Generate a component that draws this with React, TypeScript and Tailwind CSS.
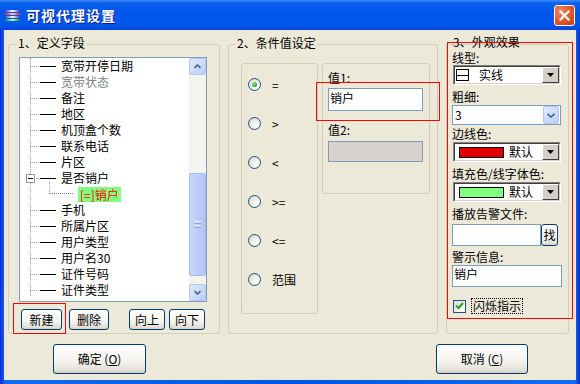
import React from "react";

const treeItems: { label: string; gray?: boolean; expand?: boolean; child?: boolean }[] = [
  { label: "宽带开停日期" },
  { label: "宽带状态", gray: true },
  { label: "备注" },
  { label: "地区" },
  { label: "机顶盒个数" },
  { label: "联系电话" },
  { label: "片区" },
  { label: "是否销户", expand: true },
  { label: "[=]销户", child: true },
  { label: "手机" },
  { label: "所属片区" },
  { label: "用户类型" },
  { label: "用户名30" },
  { label: "证件号码" },
  { label: "证件类型" },
];

function XPButton({ label, className }: { label: React.ReactNode; className: string }) {
  return (
    <div
      className={
        "flex items-center justify-center rounded-[3px] border border-[#003C74] bg-[linear-gradient(to_bottom,#FFFFFF_0%,#F4F3EE_60%,#E3E0D5_90%,#D6D0C5_100%)] text-black " +
        className
      }
    >
      {label}
    </div>
  );
}

function Radio({ checked }: { checked?: boolean }) {
  return (
    <div className="w-[13px] h-[13px] rounded-full border border-[#1C5180] bg-[radial-gradient(circle_at_70%_70%,#FFFFFF_0%,#F0EFEA_40%,#D4D0C5_100%)] flex items-center justify-center">
      {checked && <div className="w-[5px] h-[5px] rounded-full bg-[radial-gradient(circle_at_35%_35%,#8CF38C_0%,#21A121_70%,#1A7A1A_100%)]" />}
    </div>
  );
}

function ClassicArrow() {
  return (
    <div className="w-[17px] h-full bg-[#D4D0C8] border-t border-l border-t-[#FFFFFF] border-l-[#FFFFFF] border-r border-b border-r-[#404040] border-b-[#404040] flex items-center justify-center">
      <svg width="7" height="4" viewBox="0 0 7 4">
        <path d="M0 0h7L3.5 4z" fill="#000" />
      </svg>
    </div>
  );
}

function ClassicCombo({ children }: { children: React.ReactNode }) {
  return (
    <div className="w-[108px] h-[20px] border-t border-l border-t-[#808080] border-l-[#808080] border-r border-b border-r-[#FFFFFF] border-b-[#FFFFFF]">
      <div className="w-full h-full border-t border-l border-t-[#404040] border-l-[#404040] border-r border-b border-r-[#D4D0C8] border-b-[#D4D0C8] bg-white flex items-center">
        <div className="flex-1 flex items-center h-full">{children}</div>
        <ClassicArrow />
      </div>
    </div>
  );
}

export default function App() {
  return (
    <div className="w-[580px] h-[384px] flex flex-col overflow-hidden bg-[linear-gradient(to_right,#0831D9_0%,#166AEE_1%,#0055E5_50%,#166AEE_99%,#0831D9_100%)] text-[12px] leading-[16px] text-black font-['SimSun','Noto_Sans_CJK_SC','Liberation_Sans',sans-serif]">
      {/* Title bar */}
      <div className="h-[30px] flex items-center pl-[5px] pr-[5px] bg-[linear-gradient(to_bottom,#3D8BF7_0%,#0A61EE_10%,#0055EA_45%,#0058EE_80%,#0046D2_100%)]">
        <svg width="15" height="12" viewBox="0 0 15 12" className="mt-[1px]">
          <defs>
            <linearGradient id="gb" x1="0" x2="1">
              <stop offset="0" stopColor="#2040E0" />
              <stop offset="0.5" stopColor="#FFFFFF" />
              <stop offset="1" stopColor="#2040E0" />
            </linearGradient>
            <linearGradient id="gr" x1="0" x2="1">
              <stop offset="0" stopColor="#E02020" />
              <stop offset="0.5" stopColor="#FFC0C0" />
              <stop offset="1" stopColor="#E02020" />
            </linearGradient>
            <linearGradient id="gg" x1="0" x2="1">
              <stop offset="0" stopColor="#109010" />
              <stop offset="0.5" stopColor="#C0FFC0" />
              <stop offset="1" stopColor="#109010" />
            </linearGradient>
          </defs>
          <rect x="0" y="0" width="15" height="2" fill="url(#gb)" />
          <rect x="0" y="3" width="15" height="2" fill="url(#gr)" />
          <rect x="0" y="6" width="15" height="2" fill="url(#gb)" />
          <rect x="0" y="9" width="15" height="2" fill="url(#gg)" />
        </svg>
        <div className="ml-[6px] text-white font-bold text-[14px] leading-[18px] [text-shadow:1px_1px_0_#0A1E8A] tracking-[1px]">
          可视代理设置
        </div>
        <div className="ml-auto mr-[0px] w-[21px] h-[21px] rounded-[3px] border border-white bg-[radial-gradient(circle_at_30%_30%,#F08A66_0%,#E35A2B_50%,#C23A10_100%)] flex items-center justify-center">
          <svg width="11" height="11" viewBox="0 0 11 11">
            <path d="M1.5 1.5L9.5 9.5M9.5 1.5L1.5 9.5" stroke="#FFFFFF" strokeWidth="2.2" strokeLinecap="square" />
          </svg>
        </div>
      </div>

      {/* Client area */}
      <div className="flex-1 mx-[4px] mb-[4px] bg-[#ECE9D8] flex flex-col">
        <div className="flex pt-[14px] pl-[4px]">
          {/* Group 1 */}
          <div className="relative w-[212px] h-[290px] border border-[#D0D0BF] rounded-[3px] pt-[12px] pl-[10px]">
            <div className="absolute -top-[9px] left-[8px] px-[1px] bg-[#ECE9D8] leading-[14px]">1、定义字段</div>
            {/* Tree box */}
            <div className="w-[188px] h-[245px] border border-[#7F9DB9] bg-white flex">
              <div className="relative flex-1 overflow-hidden">
                <div className="absolute left-[10px] top-0 h-[238px] border-l border-dotted border-[#A0A0A0]" />
                <div className="flex flex-col">
                  {treeItems.map((it, i) =>
                    it.child ? (
                      <div key={i} className="relative h-[16px] flex items-center">
                        <div className="absolute left-[29px] -top-[4px] h-[12px] border-l border-dotted border-[#A0A0A0]" />
                        <div className="absolute left-[29px] top-[7px] w-[24px] border-t border-dotted border-[#808080]" />
                        <div className="ml-[58px] px-[2px] bg-[#80FF80] text-[#FF0000] leading-[15px]">{it.label}</div>
                      </div>
                    ) : (
                      <div key={i} className="relative h-[16px] flex items-center">
                        <div className="absolute left-[10px] top-[8px] w-[9px] border-t border-dotted border-[#A0A0A0]" />
                        {it.expand && (
                          <div className="absolute left-[6px] top-[4px] w-[9px] h-[9px] border border-[#919B9C] bg-white flex items-center justify-center">
                            <div className="w-[5px] h-[1px] bg-black" />
                          </div>
                        )}
                        <div className="absolute left-[20px] top-[8px] w-[16px] h-[1px] bg-black" />
                        <div className={"ml-[41px] " + (it.gray ? "text-[#808080]" : "text-black")}>{it.label}</div>
                      </div>
                    )
                  )}
                </div>
              </div>
              {/* Scrollbar */}
              <div className="w-[17px] h-full bg-[#F4F3EE] flex flex-col">
                <div className="h-[17px] w-[17px] rounded-[2px] border border-[#B5C8F3] bg-[linear-gradient(to_bottom_right,#E1EAFE,#B9CEF9)] flex items-center justify-center">
                  <svg width="7" height="5" viewBox="0 0 7 5">
                    <path d="M0.5 4L3.5 1L6.5 4" stroke="#4D6185" strokeWidth="1.6" fill="none" />
                  </svg>
                </div>
                <div className="mt-[98px] h-[103px] w-[17px] rounded-[2px] border border-[#A4B9EC] bg-[linear-gradient(to_right,#C8D6FB,#BCCDF8_50%,#B1C4F5)] flex flex-col items-center justify-center gap-[1px]">
                  <div className="w-[7px] h-[1px] bg-[#EEF4FE]" />
                  <div className="w-[7px] h-[1px] bg-[#8CA7E6]" />
                  <div className="w-[7px] h-[1px] bg-[#EEF4FE]" />
                  <div className="w-[7px] h-[1px] bg-[#8CA7E6]" />
                </div>
                <div className="mt-auto h-[17px] w-[17px] rounded-[2px] border border-[#B5C8F3] bg-[linear-gradient(to_bottom_right,#E1EAFE,#B9CEF9)] flex items-center justify-center">
                  <svg width="7" height="5" viewBox="0 0 7 5">
                    <path d="M0.5 1L3.5 4L6.5 1" stroke="#4D6185" strokeWidth="1.6" fill="none" />
                  </svg>
                </div>
              </div>
            </div>
            {/* Buttons */}
            <div className="flex mt-[7px] pl-[2px]">
              <XPButton label="新建" className="w-[41px] h-[21px]" />
              <XPButton label="删除" className="ml-[7px] w-[40px] h-[21px]" />
              <XPButton label="向上" className="ml-[20px] w-[36px] h-[21px]" />
              <XPButton label="向下" className="ml-[4px] w-[36px] h-[21px]" />
            </div>
            <div className="absolute left-[4px] top-[258px] w-[53px] h-[31px] border border-[#FF0000]" />
          </div>

          {/* Group 2 */}
          <div className="relative ml-[8px] w-[210px] h-[290px] border border-[#D0D0BF] rounded-[3px] pt-[18px] pl-[12px] flex items-start">
            <div className="absolute -top-[9px] left-[7px] px-[1px] bg-[#ECE9D8] leading-[14px]">2、条件值设定</div>
            <div className="w-[77px] h-[251px] border border-[#D0D0BF] rounded-[3px] pt-[1px] pl-[6px] flex flex-col">
              {["=", ">", "<", ">=", "<=", "范围"].map((s, i) => (
                <div key={i} className="h-[39px] flex items-center">
                  <Radio checked={i === 0} />
                  <div className="ml-[11px]">{s}</div>
                </div>
              ))}
            </div>
            <div className="ml-[4px] w-[108px] h-[131px] border border-[#D0D0BF] rounded-[3px] pt-[6px] pl-[5px] flex flex-col">
              <div>值1:</div>
              <div className="mt-[2px] w-[95px] h-[23px] border border-[#7F9DB9] bg-white pl-[1px] pt-[1px]">销户</div>
              <div className="mt-[11px]">值2:</div>
              <div className="mt-[3px] w-[95px] h-[21px] border border-[#7F9DB9] bg-[#D6D3CE]" />
            </div>
            <div className="absolute left-[87px] top-[37px] w-[124px] h-[39px] border border-[#FF0000]" />
          </div>

          {/* Group 3 */}
          <div className="relative ml-[8px] w-[123px] h-[290px] border border-[#D0D0BF] rounded-[3px] pt-[5px] pl-[5px] flex flex-col">
            <div className="absolute -top-[10px] left-[5px] px-[1px] leading-[14px]">3、外观效果</div>
            <div className="leading-[15px]">线型:</div>
            <div className="mt-[0px] ml-[1px]">
              <ClassicCombo>
                <div className="ml-[1px] w-[13px] h-[12px] border border-black flex items-center">
                  <div className="w-full h-[1px] bg-black" />
                </div>
                <div className="ml-[10px]">实线</div>
              </ClassicCombo>
            </div>
            <div className="mt-[4px]">粗细:</div>
            <div className="mt-[0px] w-[109px] h-[20px] border border-[#7F9DB9] bg-white flex items-center">
              <div className="flex-1 pl-[2px]">3</div>
              <div className="w-[16px] h-[18px] mr-[1px] rounded-[2px] border border-[#B5C8F3] bg-[linear-gradient(to_bottom_right,#E1EAFE,#B9CEF9)] flex items-center justify-center">
                <svg width="8" height="5" viewBox="0 0 8 5">
                  <path d="M0.5 0.8L4 4L7.5 0.8" stroke="#4D6185" strokeWidth="1.6" fill="none" />
                </svg>
              </div>
            </div>
            <div className="mt-[1px]">边线色:</div>
            <div className="mt-[0px] ml-[1px]">
              <ClassicCombo>
                <div className="ml-[4px] w-[45px] h-[11px] border border-black bg-[#E00000]" />
                <div className="ml-[5px]">默认</div>
              </ClassicCombo>
            </div>
            <div className="mt-[4px]">填充色/线字体色:</div>
            <div className="mt-[0px] ml-[1px]">
              <ClassicCombo>
                <div className="ml-[4px] w-[45px] h-[11px] border border-black bg-[#80FF80]" />
                <div className="ml-[5px]">默认</div>
              </ClassicCombo>
            </div>
            <div className="mt-[4px]">播放告警文件:</div>
            <div className="mt-[2px] flex">
              <div className="w-[89px] h-[22px] border border-[#7F9DB9] bg-white" />
              <XPButton label="找" className="w-[17px] h-[22px]" />
            </div>
            <div className="mt-[3px]">警示信息:</div>
            <div className="mt-[0px] w-[110px] h-[22px] border border-[#7F9DB9] bg-white pl-[1px]">销户</div>
            <div className="mt-[11px] ml-[1px] flex items-center">
              <div className="w-[13px] h-[13px] border border-[#1C5180] bg-[linear-gradient(to_bottom_right,#DCDBD5,#FFFFFF)] flex items-center justify-center">
                <svg width="9" height="8" viewBox="0 0 9 8">
                  <path d="M1 3.5L3.5 6L8 1" stroke="#21A121" strokeWidth="2" fill="none" />
                </svg>
              </div>
              <div className="ml-[5px] border border-dotted border-black px-[1px] leading-[14px]">闪烁指示</div>
            </div>
            <div className="absolute -left-[0px] -top-[3px] w-[126px] h-[277px] border border-[#FF0000]" />
          </div>
        </div>

        {/* Bottom buttons */}
        <div className="flex mt-[10px] pl-[49px]">
          <XPButton
            label={
              <span>
                确定 (<span className="underline">O</span>)
              </span>
            }
            className="w-[93px] h-[30px]"
          />
          <XPButton
            label={
              <span>
                取消 (<span className="underline">C</span>)
              </span>
            }
            className="ml-[290px] w-[92px] h-[30px]"
          />
        </div>
      </div>
    </div>
  );
}
